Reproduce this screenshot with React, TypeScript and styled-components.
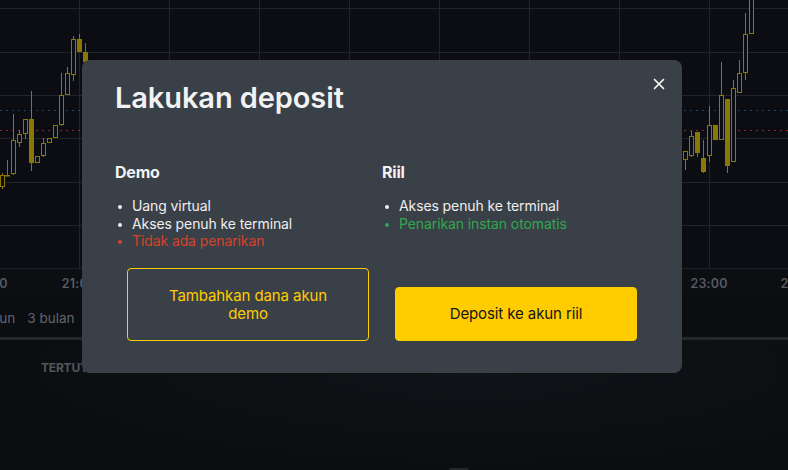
import React from "react";
import styled, { createGlobalStyle } from "styled-components";

const Global = createGlobalStyle`
  html, body { margin: 0; padding: 0; background: #0b0d11; }
  body { font-family: Inter, "Noto Sans", Arial, sans-serif; overflow: hidden; }
  * { box-sizing: border-box; }
`;

const Page = styled.div`
  position: relative;
  width: 788px;
  height: 470px;
  overflow: hidden;
  display: flex;
  flex-direction: column;
  background: #0b0d11;
`;

const ChartArea = styled.div`
  height: 268px;
  flex: none;
  background: #0b0d12;
  svg { display: block; }
`;

const AxisRow = styled.div`
  height: 29px;
  flex: none;
  display: flex;
  align-items: center;
  margin-left: -56px;
  background: #0c0e12;
  border-top: 1px solid #1f2227;
`;

const AxisLabel = styled.span`
  width: 90px;
  flex: none;
  text-align: center;
  font-size: 12.5px;
  font-weight: 600;
  color: #575b62;
  letter-spacing: 0.2px;
`;

const PeriodRow = styled.div`
  height: 40px;
  flex: none;
  display: flex;
  align-items: center;
  gap: 12px;
  margin-left: -30px;
  padding-top: 2px;
  background: #0b0d11;
`;

const Period = styled.span`
  font-size: 13.5px;
  color: #62666d;
`;

const Divider = styled.div`
  height: 3px;
  flex: none;
  background: #24272c;
`;

const Lower = styled.div`
  flex: 1;
  background: radial-gradient(ellipse at 60% 20%, #0f1317 0%, #0b0e11 70%);
  padding: 16px 0 0 41px;
  position: relative;
`;

const SectionLabel = styled.span`
  font-size: 12px;
  font-weight: 700;
  color: #52565c;
  letter-spacing: -0.2px;
`;

const Handle = styled.div`
  position: absolute;
  left: 449px;
  bottom: -4px;
  width: 20px;
  height: 6px;
  border-radius: 3px;
  background: #24272c;
`;

const Backdrop = styled.div`
  position: absolute;
  inset: 0;
  padding: 60px 0 0 82px;
`;

const Modal = styled.div`
  position: relative;
  width: 600px;
  height: 313px;
  background: #3a4047;
  border-radius: 8px;
  padding: 20px 33px 32px 33px;
  display: flex;
  flex-direction: column;
  color: #ededee;
`;

const Close = styled.button`
  position: absolute;
  top: 18px;
  right: 17px;
  width: 12px;
  height: 12px;
  padding: 0;
  border: none;
  background: none;
  cursor: pointer;
  display: flex;
  svg { display: block; }
`;

const Title = styled.h2`
  margin: 0;
  font-size: 29px;
  line-height: 35px;
  font-weight: 600;
  letter-spacing: -0.1px;
  color: #f1f2f3;
`;

const Columns = styled.div`
  flex: 1;
  display: grid;
  grid-template-columns: 1fr 1fr;
  margin-top: 47px;
`;

const Column = styled.div`
  display: flex;
  flex-direction: column;
`;

const Heading = styled.h3`
  margin: 0;
  font-size: 16px;
  line-height: 20px;
  font-weight: 700;
  color: #f1f2f3;
  letter-spacing: -0.2px;
`;

const List = styled.ul`
  list-style: none;
  margin: 15px 0 0 0;
  padding: 0;
`;

const Item = styled.li<{ $tone?: "ok" | "bad" }>`
  position: relative;
  padding-left: 17px;
  font-size: 14px;
  line-height: 17.5px;
  letter-spacing: -0.1px;
  color: ${(p) => (p.$tone === "ok" ? "#2fa84f" : p.$tone === "bad" ? "#d4432c" : "#eeeeef")};
  &::before {
    content: "";
    position: absolute;
    left: 3px;
    top: 8px;
    width: 4px;
    height: 4px;
    border-radius: 50%;
    background: currentColor;
  }
`;

const ButtonWrap = styled.div<{ $inset: number }>`
  margin-top: auto;
  padding-left: ${(p) => p.$inset}px;
`;

const Button = styled.button<{ $primary?: boolean }>`
  display: block;
  width: 242px;
  height: ${(p) => (p.$primary ? "54px" : "73px")};
  border-radius: 4px;
  font-family: inherit;
  font-size: 15px;
  line-height: 18px;
  letter-spacing: -0.1px;
  padding: 0 32px;
  cursor: pointer;
  border: 1px solid #ffcc00;
  background: ${(p) => (p.$primary ? "#ffcc00" : "transparent")};
  color: ${(p) => (p.$primary ? "#141414" : "#ffcc00")};
`;

type Candle = [number, number, number, number, number, boolean];

// x, bodyTop, bodyBottom, wickTop, wickBottom, filled
const candles: Candle[] = [
  [2, 175, 187, 173, 189, false],
  [7, 175, 175.5, 160, 176, false],
  [13, 140, 174, 114, 175, false],
  [19, 134, 143, 130, 147, false],
  [25, 119, 134, 119, 139, false],
  [31, 119, 163, 91, 171, true],
  [37, 156, 163, 156, 163, false],
  [43, 143, 156, 138, 157, false],
  [49, 138, 143, 138, 143, false],
  [55, 125, 138, 125, 138, false],
  [61, 95, 125, 73, 126, false],
  [67, 73, 95, 67, 95, false],
  [73, 39, 75, 36, 81, false],
  [79, 39, 52, 34, 52, true],
  [85, 52, 62, 43, 63, true],
  [685, 151, 160, 151, 170, false],
  [691, 136, 156, 131, 157, false],
  [697, 132, 153, 132, 157, true],
  [703, 158, 172, 140, 173, true],
  [709, 125, 156, 106, 162, false],
  [715, 125, 140, 125, 140, true],
  [721, 95, 140, 62, 140, false],
  [727, 99, 166, 99, 173, true],
  [733, 88, 162, 80, 162, false],
  [739, 73, 93, 60, 93, false],
  [745, 34, 73, 13, 80, false],
  [751, -2, 34, -2, 34, false],
];

const CANDLE = "#8a7806";

function Chart() {
  const vLines = Array.from({ length: 9 }, (_, i) => 79 + i * 90);
  const hLines = [8, 52, 95, 138, 182, 225];
  return (
    <svg width={788} height={268} viewBox="0 0 788 268">
      {vLines.map((x) => (
        <line key={`v${x}`} x1={x + 0.5} x2={x + 0.5} y1={0} y2={268} stroke="#212429" strokeWidth={1} />
      ))}
      {hLines.map((y) => (
        <line key={`h${y}`} x1={0} x2={788} y1={y + 0.5} y2={y + 0.5} stroke="#212429" strokeWidth={1} />
      ))}
      <line x1={0} x2={788} y1={110.5} y2={110.5} stroke="#1c4a63" strokeWidth={1} strokeDasharray="2 4" />
      <line x1={0} x2={788} y1={130.5} y2={130.5} stroke="#8a2b2b" strokeWidth={1} strokeDasharray="2 4" />
      {candles.map(([x, bt, bb, wt, wb, filled], i) => (
        <g key={i}>
          <line x1={x + 0.5} x2={x + 0.5} y1={wt} y2={wb} stroke={CANDLE} strokeWidth={1} />
          {filled ? (
            <rect x={x - 2} y={bt} width={5} height={Math.max(1, bb - bt)} fill={CANDLE} />
          ) : (
            <rect x={x - 1.5} y={bt + 0.5} width={4} height={Math.max(0.5, bb - bt - 1)} fill="#0b0d12" stroke={CANDLE} strokeWidth={1} />
          )}
        </g>
      ))}
    </svg>
  );
}

const axisLabels = ["20:40", "21:00", "", "", "", "", "", "", "23:00", "23:20"];

export default function App() {
  return (
    <>
      <Global />
      <Page>
        <ChartArea>
          <Chart />
        </ChartArea>
        <AxisRow>
          {axisLabels.map((l, i) => (
            <AxisLabel key={i}>{l}</AxisLabel>
          ))}
        </AxisRow>
        <PeriodRow>
          <Period>1 tahun</Period>
          <Period>3 bulan</Period>
          <Period>1 bulan</Period>
          <Period>5 hari</Period>
          <Period>1 hari</Period>
        </PeriodRow>
        <Divider />
        <Lower>
          <SectionLabel>TERTUTUP</SectionLabel>
          <Handle />
        </Lower>
        <Backdrop>
          <Modal role="dialog" aria-label="Lakukan deposit">
            <Close aria-label="Tutup">
              <svg width="12" height="12" viewBox="0 0 12 12">
                <path d="M1.5 1.5 L10.5 10.5 M10.5 1.5 L1.5 10.5" stroke="#ffffff" strokeWidth="1.6" strokeLinecap="round" />
              </svg>
            </Close>
            <Title>Lakukan deposit</Title>
            <Columns>
              <Column>
                <Heading>Demo</Heading>
                <List>
                  <Item>Uang virtual</Item>
                  <Item>Akses penuh ke terminal</Item>
                  <Item $tone="bad">Tidak ada penarikan</Item>
                </List>
                <ButtonWrap $inset={12}>
                  <Button>Tambahkan dana akun demo</Button>
                </ButtonWrap>
              </Column>
              <Column>
                <Heading>Riil</Heading>
                <List>
                  <Item>Akses penuh ke terminal</Item>
                  <Item $tone="ok">Penarikan instan otomatis</Item>
                </List>
                <ButtonWrap $inset={13}>
                  <Button $primary>Deposit ke akun riil</Button>
                </ButtonWrap>
              </Column>
            </Columns>
          </Modal>
        </Backdrop>
      </Page>
    </>
  );
}
